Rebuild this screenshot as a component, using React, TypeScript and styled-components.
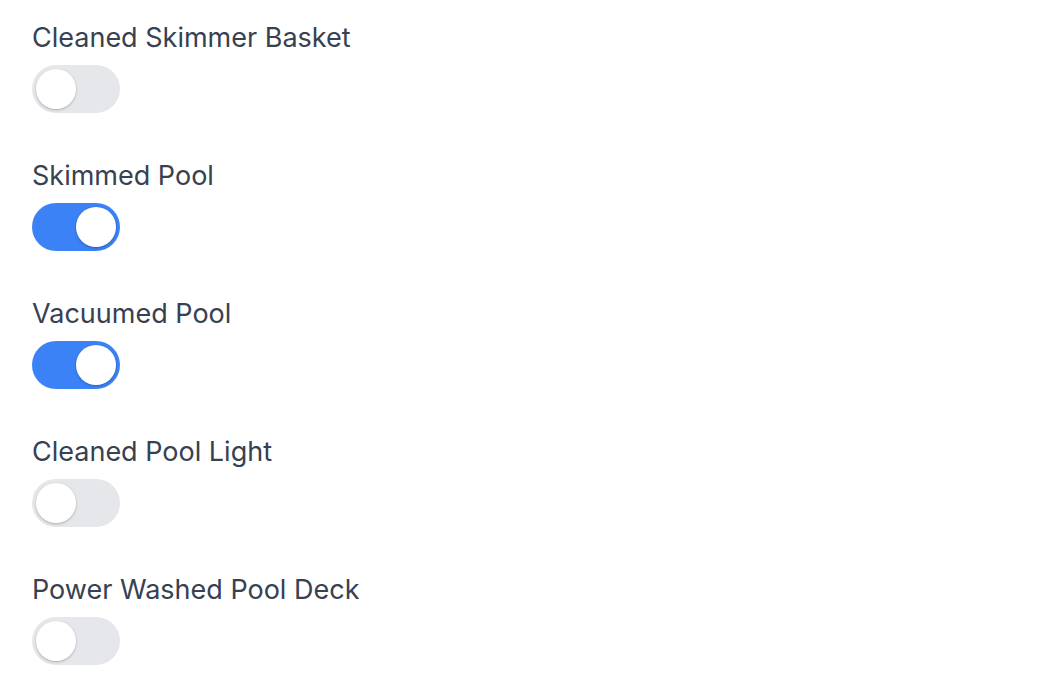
import styled, { createGlobalStyle } from "styled-components";
import { useState } from "react";

const GlobalStyle = createGlobalStyle`
  body {
    margin: 0;
    background: #ffffff;
    font-family: Inter, "Noto Sans", sans-serif;
  }
`;

const ChecklistForm = styled.div`
  display: flex;
  flex-direction: column;
  gap: 47px;
  padding: 22px 32px;
`;

const Field = styled.div`
  display: flex;
  flex-direction: column;
  align-items: flex-start;
  gap: 11px;
`;

const Label = styled.label`
  font-size: 27px;
  line-height: 32px;
  font-weight: 400;
  color: #374151;
`;

const Track = styled.button<{ $on: boolean }>`
  position: relative;
  width: 88px;
  height: 48px;
  padding: 0;
  border: none;
  border-radius: 24px;
  background: ${(p) => (p.$on ? "#3b82f6" : "#e5e7eb")};
  cursor: pointer;
`;

const Knob = styled.span<{ $on: boolean }>`
  position: absolute;
  top: 4px;
  left: ${(p) => (p.$on ? "44px" : "4px")};
  width: 40px;
  height: 40px;
  border-radius: 50%;
  background: #ffffff;
  box-shadow: 0 1px 3px rgba(0, 0, 0, 0.18), 0 1px 2px rgba(0, 0, 0, 0.08);
  transition: left 0.15s ease;
`;

const tasks = [
  { name: "Cleaned Skimmer Basket", done: false },
  { name: "Skimmed Pool", done: true },
  { name: "Vacuumed Pool", done: true },
  { name: "Cleaned Pool Light", done: false },
  { name: "Power Washed Pool Deck", done: false },
];

const Toggle = ({ on, onChange }: { on: boolean; onChange: () => void }) => (
  <Track $on={on} onClick={onChange} role="switch" aria-checked={on}>
    <Knob $on={on} />
  </Track>
);

const App = () => {
  const [done, setDone] = useState(tasks.map((t) => t.done));

  return (
    <>
      <GlobalStyle />
      <ChecklistForm>
        {tasks.map((task, i) => (
          <Field key={task.name}>
            <Label>{task.name}</Label>
            <Toggle
              on={done[i]}
              onChange={() =>
                setDone((prev) => prev.map((v, j) => (j === i ? !v : v)))
              }
            />
          </Field>
        ))}
      </ChecklistForm>
    </>
  );
};

export default App;
